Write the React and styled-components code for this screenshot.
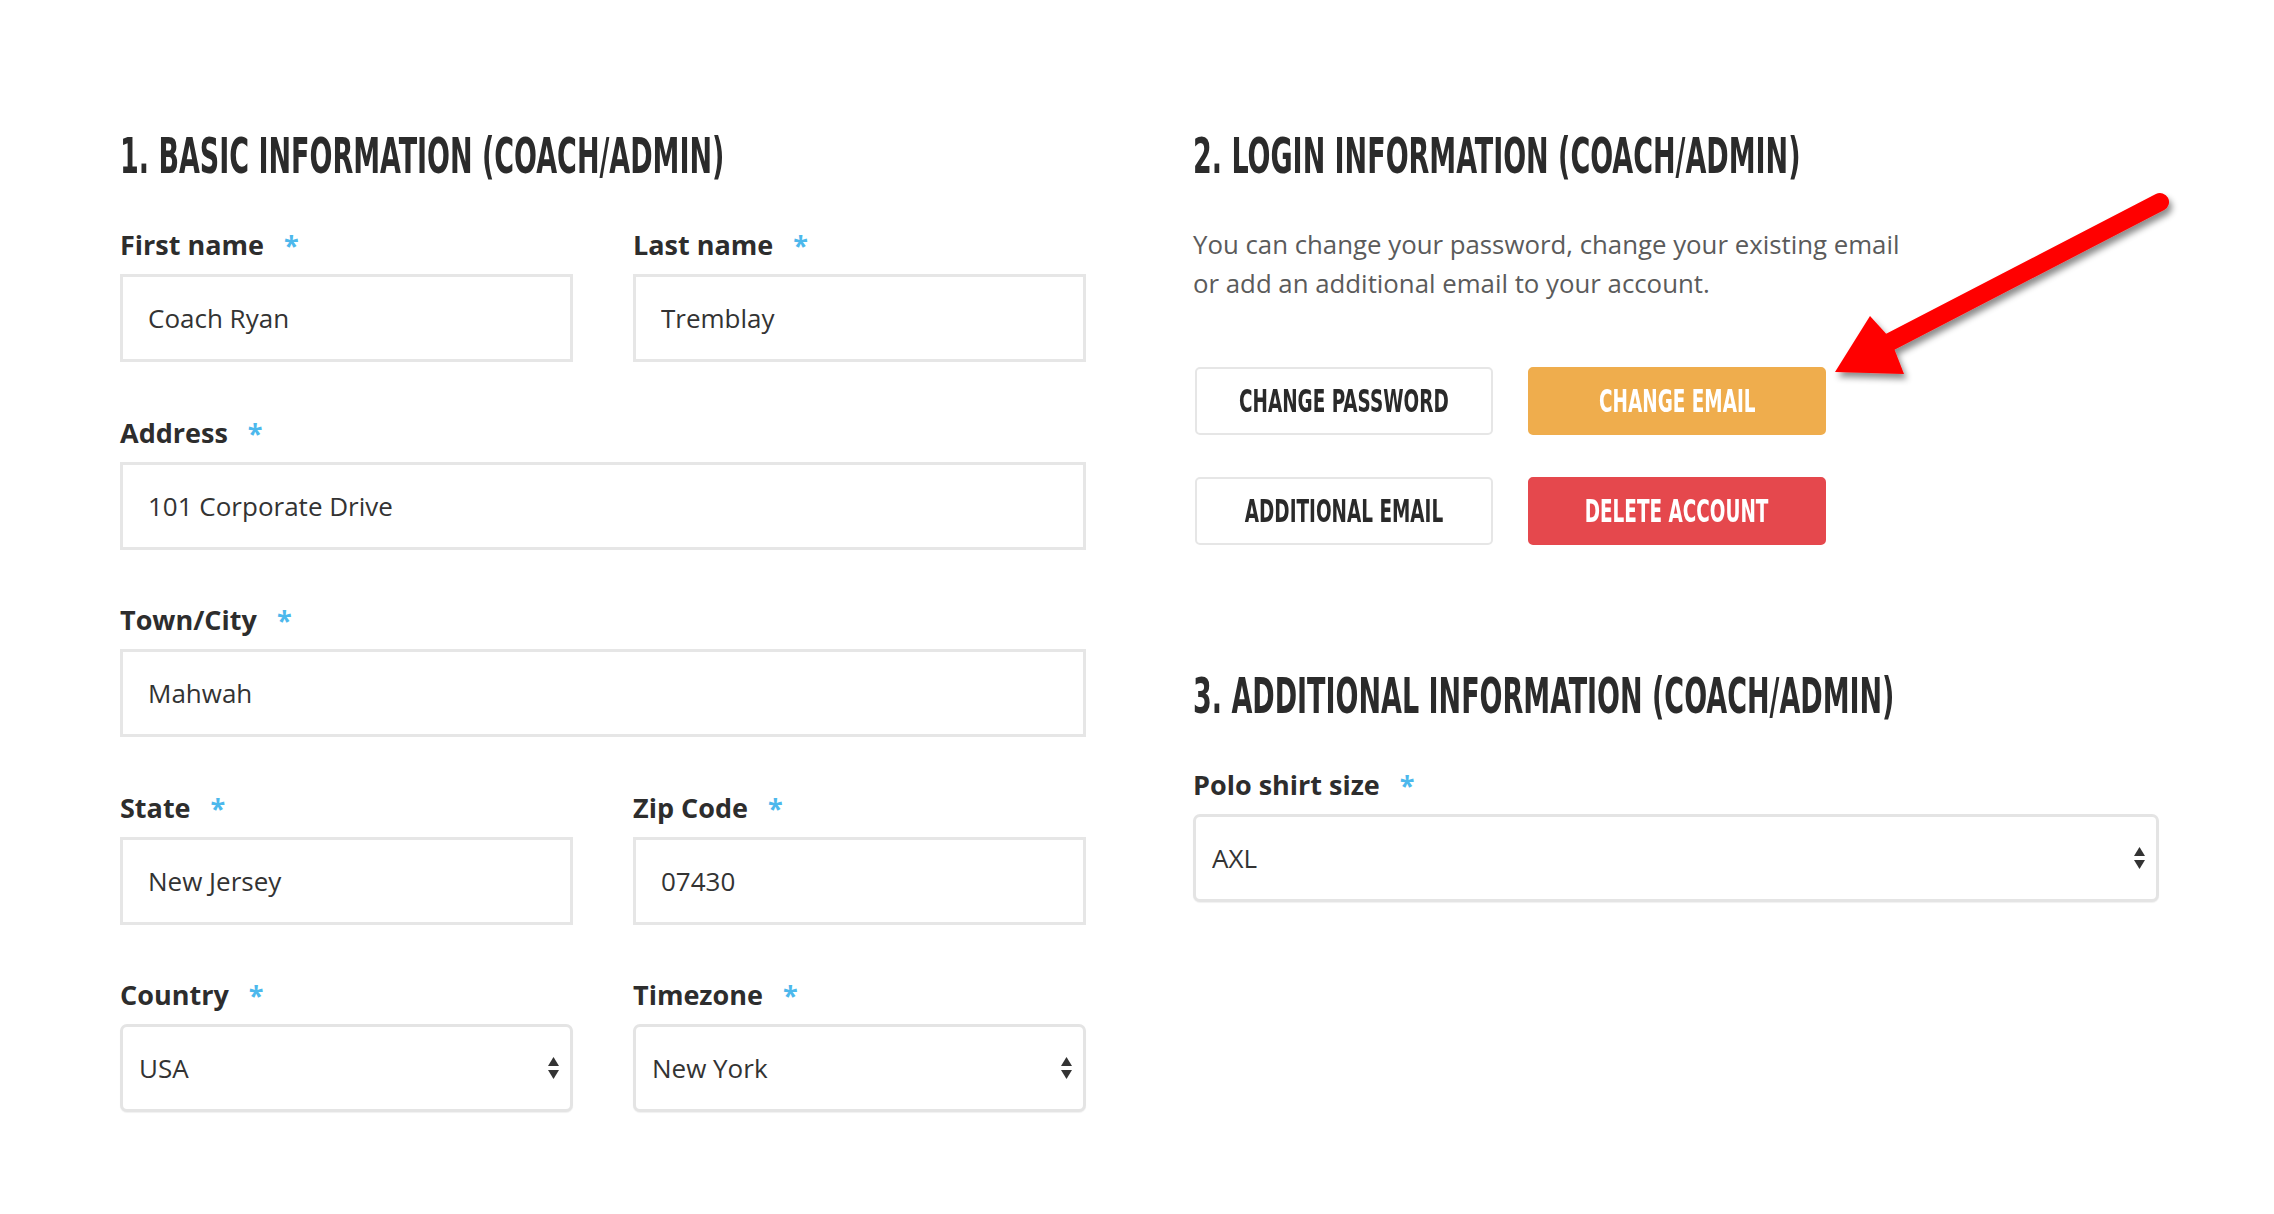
import React from "react";
import styled, { createGlobalStyle } from "styled-components";

const GlobalStyle = createGlobalStyle`
  * {
    box-sizing: border-box;
  }

  html,
  body {
    margin: 0;
    padding: 0;
    background: #ffffff;
  }

  body {
    font-family: "Open Sans", "Noto Sans", "Liberation Sans", sans-serif;
    color: #333333;
  }
`;

const DISPLAY_FONT = `"Liberation Sans Narrow", "DejaVu Sans Condensed", "Liberation Sans", sans-serif`;

const Page = styled.div`
  position: relative;
  width: 2274px;
  min-height: 1214px;
  padding: 130px 0 0 120px;
  display: grid;
  grid-template-columns: 966px 966px;
  column-gap: 107px;
  align-items: start;
`;

const Column = styled.section`
  display: flex;
  flex-direction: column;
`;

const Heading = styled.h2`
  margin: 0 0 41px;
  font-family: ${DISPLAY_FONT};
  font-weight: 700;
  font-size: 49px;
  line-height: 54px;
  color: #2b2b2b;
  white-space: nowrap;
`;

// the display face in the design is much narrower than any installed font
const Squeeze = styled.span`
  display: inline-block;
  flex-shrink: 0;
  transform: scaleX(${p => p.$scale || 0.612});
  transform-origin: ${p => p.$origin || "left center"};
`;

const FieldRow = styled.div`
  display: grid;
  grid-template-columns: ${p => (p.$split ? "1fr 1fr" : "1fr")};
  column-gap: 60px;
  margin-bottom: 50.5px;
`;

const Field = styled.div`
  display: flex;
  flex-direction: column;
`;

const Label = styled.label`
  margin-bottom: 10px;
  font-weight: 700;
  font-size: 27px;
  line-height: 39px;
  color: #2d2d2d;
`;

const Required = styled.span`
  margin-left: 20px;
  font-size: 27px;
  color: #4db8ec;
`;

const TextInput = styled.input`
  width: 100%;
  height: 88px;
  padding: 0 25px;
  border: 3px solid #e6e6e6;
  border-radius: 0;
  background: #ffffff;
  font-family: "Open Sans", "Noto Sans", sans-serif;
  font-size: 26px;
  color: #333333;
  outline: none;
`;

const SelectWrap = styled.div`
  position: relative;
  width: 100%;
`;

const SelectBox = styled.select`
  width: 100%;
  height: 88px;
  padding: 0 50px 0 16px;
  border: 3px solid #e4e4e4;
  border-radius: 7px;
  background: #ffffff;
  box-shadow: 0 1px 1px rgba(0, 0, 0, 0.06);
  font-family: "Open Sans", "Noto Sans", sans-serif;
  font-size: 26px;
  color: #333333;
  appearance: none;
  -webkit-appearance: none;
  outline: none;
`;

const SelectArrows = styled.svg`
  position: absolute;
  right: 14px;
  top: 50%;
  transform: translateY(-50%);
  pointer-events: none;
`;

const Intro = styled.p`
  margin: 0 0 64px;
  font-size: 25.8px;
  line-height: 39px;
  color: #5b5b5b;
`;

const ButtonGrid = styled.div`
  display: grid;
  grid-template-columns: repeat(2, 298px);
  column-gap: 35px;
  row-gap: 42px;
  margin: 0 0 125px 2px;
`;

const ActionButton = styled.button`
  display: flex;
  align-items: center;
  justify-content: center;
  height: 68px;
  padding: 0;
  overflow: hidden;
  border: 2px solid ${p => p.$fill || "#e6e6e6"};
  border-radius: 5px;
  background: ${p => p.$fill || "#ffffff"};
  color: ${p => (p.$fill ? "#ffffff" : "#2a2a2a")};
  font-family: ${DISPLAY_FONT};
  font-weight: 700;
  font-size: 32px;
  line-height: 1;
  white-space: nowrap;
  cursor: pointer;
`;

const ArrowMark = styled.svg`
  position: absolute;
  left: 1820px;
  top: 180px;
  pointer-events: none;
`;

const Select = ({ value }) => (
  <SelectWrap>
    <SelectBox defaultValue={value}>
      <option>{value}</option>
    </SelectBox>
    <SelectArrows width="11" height="22" viewBox="0 0 11 22">
      <polygon points="0,9 5.5,0 11,9" fill="#333" />
      <polygon points="0,13 11,13 5.5,22" fill="#333" />
    </SelectArrows>
  </SelectWrap>
);

const FormField = ({ label, children }) => (
  <Field>
    <Label>
      {label}
      <Required>*</Required>
    </Label>
    {children}
  </Field>
);

const Title = ({ children }) => (
  <Heading>
    <Squeeze>{children}</Squeeze>
  </Heading>
);

const Action = ({ fill, children }) => (
  <ActionButton $fill={fill}>
    <Squeeze $scale={0.64} $origin="center">
      {children}
    </Squeeze>
  </ActionButton>
);

const App = () => (
  <>
    <GlobalStyle />
    <Page>
      <Column>
        <Title>1. BASIC INFORMATION (COACH/ADMIN)</Title>
        <FieldRow $split>
          <FormField label="First name">
            <TextInput defaultValue="Coach Ryan" />
          </FormField>
          <FormField label="Last name">
            <TextInput defaultValue="Tremblay" />
          </FormField>
        </FieldRow>
        <FieldRow>
          <FormField label="Address">
            <TextInput defaultValue="101 Corporate Drive" />
          </FormField>
        </FieldRow>
        <FieldRow>
          <FormField label="Town/City">
            <TextInput defaultValue="Mahwah" />
          </FormField>
        </FieldRow>
        <FieldRow $split>
          <FormField label="State">
            <TextInput defaultValue="New Jersey" />
          </FormField>
          <FormField label="Zip Code">
            <TextInput defaultValue="07430" />
          </FormField>
        </FieldRow>
        <FieldRow $split>
          <FormField label="Country">
            <Select value="USA" />
          </FormField>
          <FormField label="Timezone">
            <Select value="New York" />
          </FormField>
        </FieldRow>
      </Column>

      <Column>
        <Title>2. LOGIN INFORMATION (COACH/ADMIN)</Title>
        <Intro>
          You can change your password, change your existing email
          <br />
          or add an additional email to your account.
        </Intro>
        <ButtonGrid>
          <Action>CHANGE PASSWORD</Action>
          <Action fill="#efad4d">CHANGE EMAIL</Action>
          <Action>ADDITIONAL EMAIL</Action>
          <Action fill="#e5484d">DELETE ACCOUNT</Action>
        </ButtonGrid>

        <Title>3. ADDITIONAL INFORMATION (COACH/ADMIN)</Title>
        <FieldRow>
          <FormField label="Polo shirt size">
            <Select value="AXL" />
          </FormField>
        </FieldRow>
      </Column>

      <ArrowMark width="380" height="220" viewBox="0 0 380 220">
        <defs>
          <filter id="arrowShadow" x="-20%" y="-20%" width="150%" height="160%">
            <feDropShadow dx="3" dy="5" stdDeviation="3" floodColor="#000" floodOpacity="0.45" />
          </filter>
        </defs>
        <g filter="url(#arrowShadow)">
          <line x1="340" y1="22" x2="66" y2="164" stroke="#ff0000" strokeWidth="18" strokeLinecap="round" />
          <polygon points="15,192 50,136 70,158 84,194" fill="#ff0000" />
        </g>
      </ArrowMark>
    </Page>
  </>
);

export default App;
